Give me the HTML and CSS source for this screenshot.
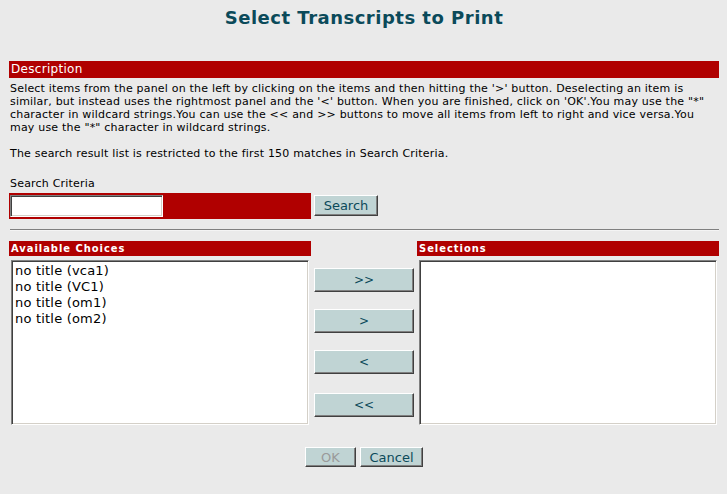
FILE: index.html
```html
<!DOCTYPE html>
<html>
<head>
<meta charset="utf-8">
<title>Select Transcripts to Print</title>
<link rel="stylesheet" href="styles.css">
</head>
<body>
<div class="page">
  <h1 class="title">Select Transcripts to Print</h1>
  <div class="bar bar-desc">Description</div>
  <p class="desc">Select items from the panel on the left by clicking on the items and then hitting the '&gt;' button. Deselecting an item is similar, but instead uses the rightmost panel and the '&lt;' button. When you are finished, click on 'OK'.You may use the "*" character in wildcard strings.You can use the &lt;&lt; and &gt;&gt; buttons to move all items from left to right and vice versa.You may use the "*" character in wildcard strings.</p>
  <p class="desc desc-note">The search result list is restricted to the first 150 matches in Search Criteria.</p>
  <div class="label">Search Criteria</div>
  <div class="search-row">
    <div class="search-box"><input class="search-input" type="text"></div>
    <button class="btn btn-search">Search</button>
  </div>
  <div class="rule"></div>
  <div class="chooser">
    <div class="col">
      <div class="bar bar-head">Available Choices</div>
      <div class="listbox">
        <div class="item">no title (vca1)</div>
        <div class="item">no title (VC1)</div>
        <div class="item">no title (om1)</div>
        <div class="item">no title (om2)</div>
      </div>
    </div>
    <div class="mid">
      <button class="btn btn-move">&gt;&gt;</button>
      <button class="btn btn-move">&gt;</button>
      <button class="btn btn-move">&lt;</button>
      <button class="btn btn-move btn-last">&lt;&lt;</button>
    </div>
    <div class="col">
      <div class="bar bar-head">Selections</div>
      <div class="listbox"></div>
    </div>
  </div>
  <div class="actions">
    <button class="btn btn-ok" disabled>OK</button>
    <button class="btn btn-cancel">Cancel</button>
  </div>
</div>
</body>
</html>
```
FILE: styles.css
```css
html, body {
  margin: 0;
  padding: 0;
  background: #eaeaea;
}
body {
  font-family: "DejaVu Sans", Verdana, sans-serif;
  font-size: 11px;
  color: #000;
}
.page {
  width: 710px;
  padding: 0 8px 0 9px;
}
.title {
  margin: 0;
  padding-top: 7px;
  height: 61px;
  box-sizing: border-box;
  text-align: center;
  font-size: 18px;
  line-height: 22px;
  font-weight: bold;
  letter-spacing: 0.5px;
  color: #0b4a5a;
}
.bar {
  background: #b00000;
  color: #fff;
}
.bar-desc {
  height: 17px;
  line-height: 17px;
  padding-left: 2px;
  font-size: 12px;
  letter-spacing: 0.3px;
}
.desc {
  margin: 4px 0 0 1px;
  line-height: 13px;
  letter-spacing: 0.2px;
}
.desc-note {
  margin-top: 13px;
}
.label {
  margin: 17px 0 0 1px;
  line-height: 13px;
  letter-spacing: 0.2px;
}
.search-row {
  display: flex;
  align-items: flex-start;
  margin-top: 3px;
}
.search-box {
  width: 302px;
  height: 26px;
  background: #b00000;
  box-sizing: border-box;
  padding: 2px 0 0 1px;
}
.search-input {
  display: block;
  width: 153px;
  height: 22px;
  margin: 0;
  padding: 0 2px;
  box-sizing: border-box;
  background: #fff;
  border-style: solid;
  border-width: 1px;
  border-color: #808080 #ffffff #ffffff #808080;
  box-shadow: inset 1px 1px 0 #404040, inset -1px -1px 0 #d4d0c8;
  outline: none;
}
.btn {
  display: block;
  margin: 0;
  padding: 0;
  box-sizing: border-box;
  background: #c0d4d4;
  color: #0b4a5a;
  font-family: "DejaVu Sans", Verdana, sans-serif;
  font-size: 13px;
  border-style: solid;
  border-width: 1px;
  border-color: #ffffff #404040 #404040 #ffffff;
  box-shadow: inset -1px -1px 0 #808080;
  cursor: default;
}
.btn-search {
  width: 64px;
  height: 21px;
  margin: 2px 0 0 3px;
  line-height: 18px;
}
.rule {
  margin-top: 10px;
  margin-left: 1px;
  height: 1px;
  background: #808080;
  border-bottom: 1px solid #f4f4f4;
}
.chooser {
  display: flex;
  margin-top: 10px;
}
.col {
  width: 302px;
}
.bar-head {
  height: 15px;
  line-height: 15px;
  padding-left: 2px;
  font-family: "DejaVu Sans Condensed", "DejaVu Sans", sans-serif;
  font-stretch: condensed;
  font-weight: bold;
  font-size: 11px;
  letter-spacing: 1px;
}
.listbox {
  width: 298px;
  height: 165px;
  margin: 4px 0 0 2px;
  box-sizing: border-box;
  background: #fff;
  border-style: solid;
  border-width: 1px;
  border-color: #808080 #ffffff #ffffff #808080;
  box-shadow: inset 1px 1px 0 #404040, inset -1px -1px 0 #d4d0c8;
  padding: 2px 3px;
}
.item {
  font-size: 13px;
  line-height: 16px;
  letter-spacing: 0.2px;
  color: #000;
}
.mid {
  width: 106px;
  padding: 7px 3px 0;
  box-sizing: border-box;
  display: flex;
  flex-direction: column;
  gap: 17px;
  margin-top: 20px;
}
.btn-move {
  width: 100px;
  height: 24px;
  line-height: 20px;
  font-size: 12px;
}
.btn-last {
  margin-top: 2px;
}
.actions {
  display: flex;
  gap: 4px;
  margin: 22px 0 0 296px;
}
.btn-ok {
  width: 51px;
  height: 20px;
  color: #9a9a9a;
  line-height: 17px;
}
.btn-cancel {
  width: 63px;
  height: 20px;
  line-height: 17px;
}
```
